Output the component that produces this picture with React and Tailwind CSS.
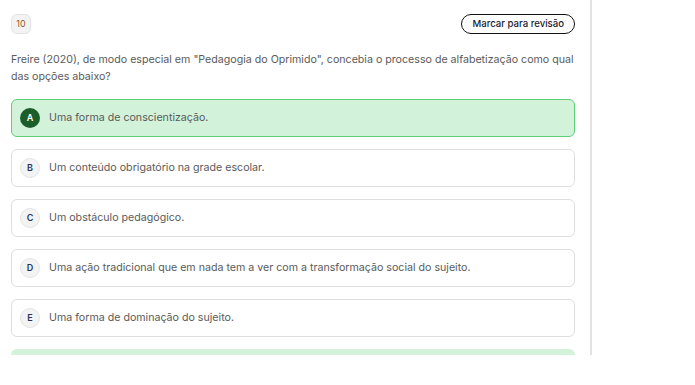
export default function App() {
  const options = [
    { l: "A", t: "Uma forma de conscientização.", sel: true },
    { l: "B", t: "Um conteúdo obrigatório na grade escolar." },
    { l: "C", t: "Um obstáculo pedagógico." },
    { l: "D", t: "Uma ação tradicional que em nada tem a ver com a transformação social do sujeito." },
    { l: "E", t: "Uma forma de dominação do sujeito." },
  ];
  return (
    <div className="w-[695px] h-[385px] bg-white" style={{ fontFamily: "Inter, 'Noto Sans', sans-serif" }}>
      <div className="w-[592px] h-[355px] overflow-hidden border-r-2 border-[#e2e2e2] pl-[11px] pr-[15px] pt-[14px]">
        <div className="flex items-center justify-between h-[20px]">
          <div className="w-[20px] h-[20px] rounded-md bg-[#f3f3f3] border border-[#e4e4e4] flex items-center justify-center text-[9px] text-[#8a5a2a]">10</div>
          <div className="h-[20px] px-[10px] rounded-full border border-[#111] flex items-center text-[9.6px] font-medium text-[#1a1a2e]">Marcar para revisão</div>
        </div>
        <p className="mt-[17px] text-[10.65px] leading-[17px] text-[#5a5a5a]">
          Freire (2020), de modo especial em "Pedagogia do Oprimido", concebia o processo de alfabetização como qual das opções abaixo?
        </p>
        <div className="mt-[14px] flex flex-col gap-[12px]">
          {options.map((o) => (
            <div
              key={o.l}
              className={
                "h-[38px] rounded-md border flex items-center px-[8px] gap-[9px] " +
                (o.sel ? "bg-[#d2f2da] border-[#5ccf76]" : "bg-white border-[#dedede]")
              }
            >
              <div
                className={
                  "w-[20px] h-[20px] rounded-full flex items-center justify-center text-[9px] font-semibold " +
                  (o.sel ? "bg-[#1b5e2a] text-white" : "bg-[#f3f3f3] border border-[#e4e4e4] text-[#1f3560]")
                }
              >
                {o.l}
              </div>
              <span className="text-[10.65px] text-[#5a5a5a]">{o.t}</span>
            </div>
          ))}
          <div className="h-[38px] rounded-md bg-[#d2f2da]" />
        </div>
      </div>
    </div>
  );
}
